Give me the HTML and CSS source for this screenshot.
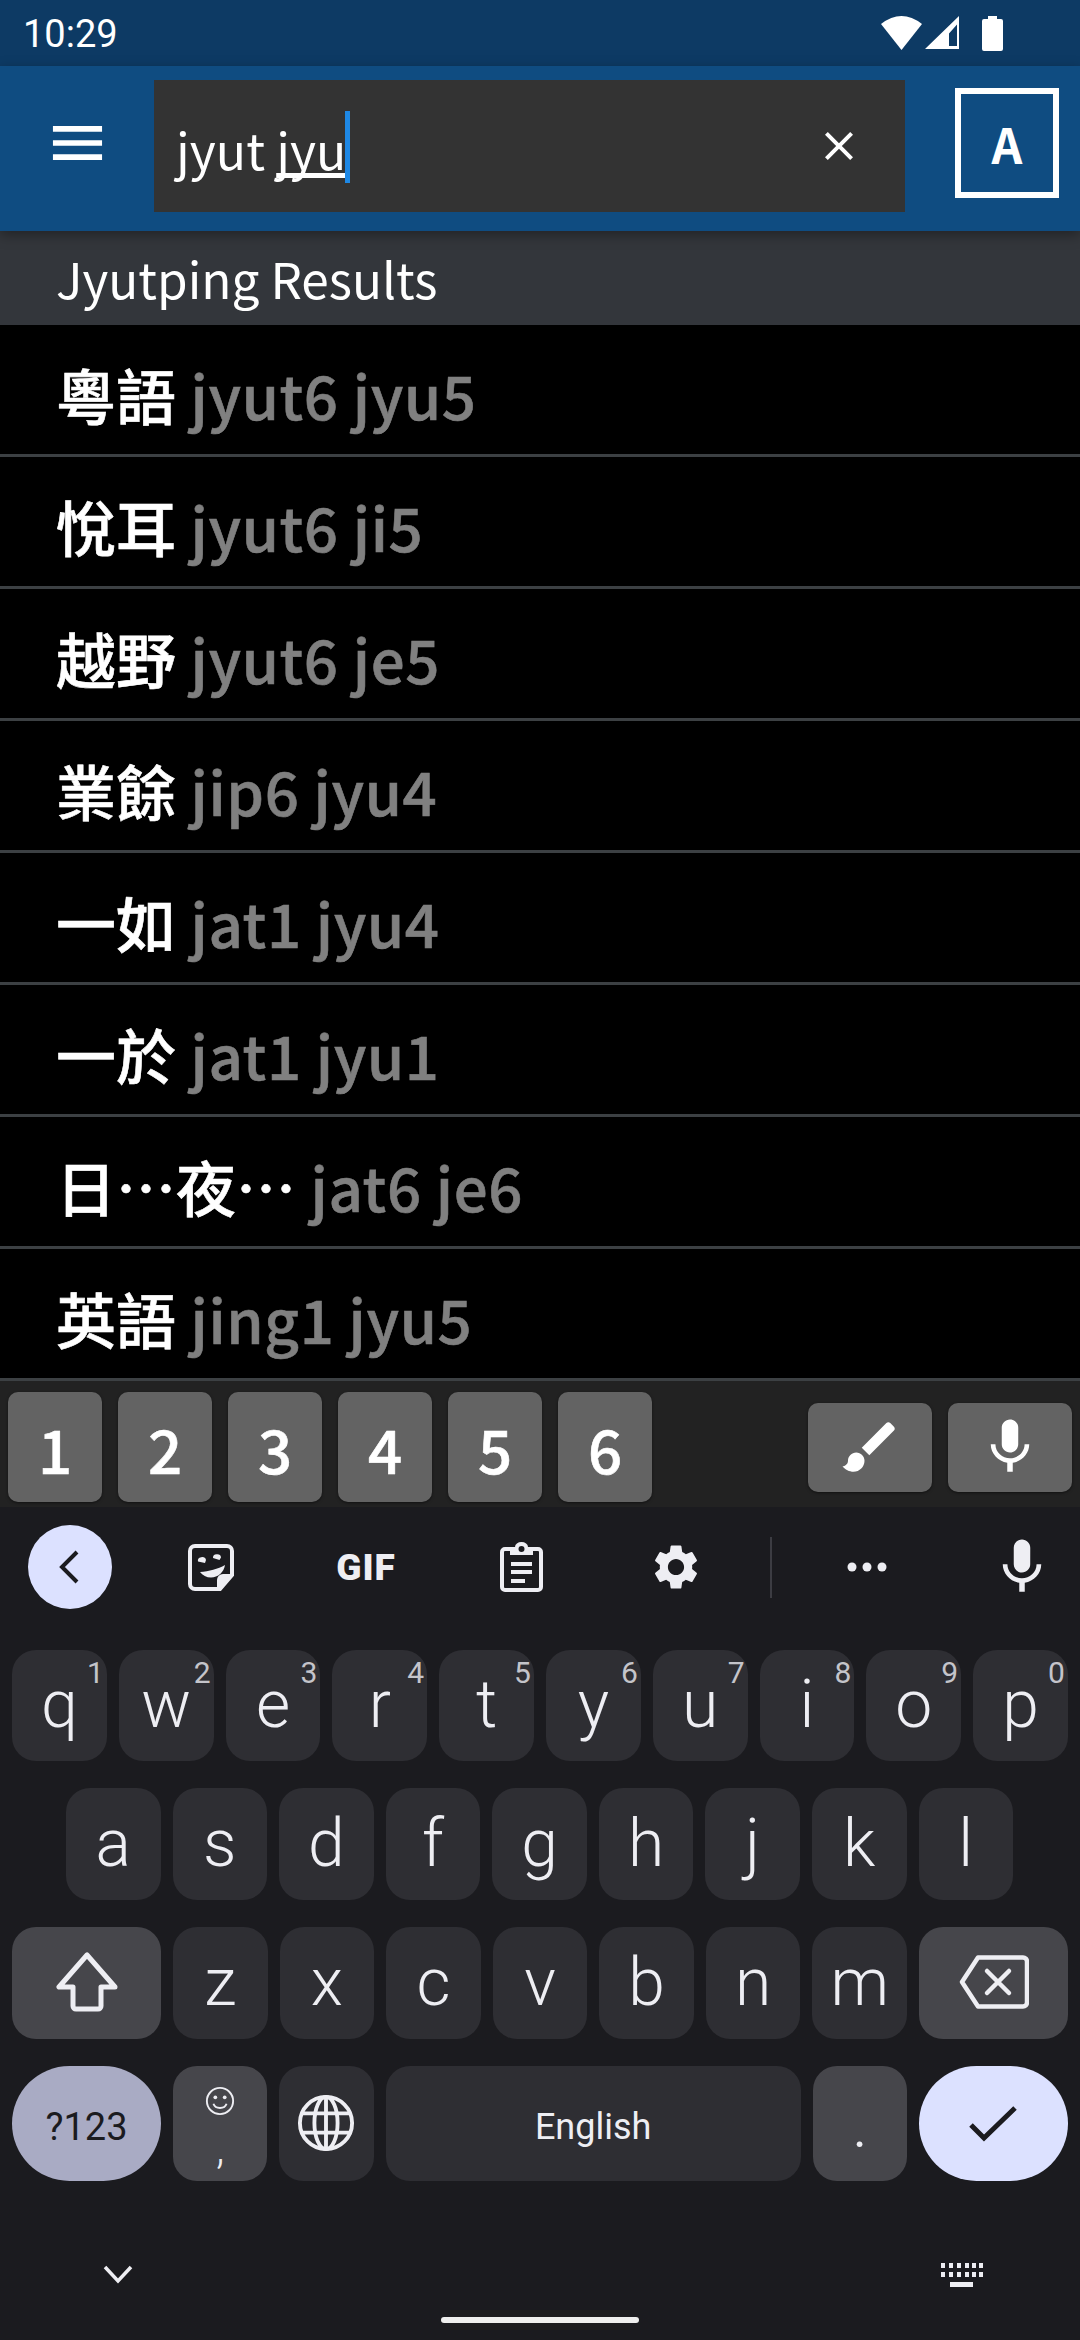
FILE: index.html
```html
<!DOCTYPE html>
<html lang="en">
<head>
    <meta charset="UTF-8">
    <meta name="viewport" content="width=device-width, initial-scale=1.0">
    <title>Jyutping Search</title>
    <link rel="stylesheet" href="styles.css">
</head>
<body>
    <div class="statusbar">
        <span class="clock">10:29</span>
        <div class="status-icons">
            <svg class="wifi" viewBox="0 0 41 34"><path d="M20.500 34 0 8Q20.500 -8 41 8z"/></svg>
            <svg class="signal" viewBox="0 0 34 34"><path d="M34 0V33H0zM32 8.500 24 17.500V30H32z" fill-rule="evenodd"/></svg>
            <svg class="battery" viewBox="0 0 21 35"><path d="M6 0h9v3h4a2 2 0 0 1 2 2v28a2 2 0 0 1-2 2H2a2 2 0 0 1-2-2V5a2 2 0 0 1 2-2h4z"/></svg>
        </div>
    </div>

    <div class="appbar">
        <svg class="menu-icon" viewBox="0 0 52 36"><path d="M0 0h52v6H0zM0 15h52v6H0zM0 30h52v6H0z"/></svg>
        <div class="search-box">
            <span class="search-text">jyut <u>jyu</u></span><span class="caret"></span>
            <svg class="clear-icon" viewBox="0 0 24 24"><path d="M19 6.410 17.590 5 12 10.590 6.410 5 5 6.410 10.590 12 5 17.590 6.410 19 12 13.410 17.590 19 19 17.590 13.410 12z"/></svg>
        </div>
        <div class="lang-box">A</div>
    </div>

    <div class="results-header">Jyutping Results</div>

    <div class="results">
        <div class="row"><span class="word">粵語</span> <span class="jyut">jyut6 jyu5</span></div>
        <div class="row"><span class="word">悅耳</span> <span class="jyut">jyut6 ji5</span></div>
        <div class="row"><span class="word">越野</span> <span class="jyut">jyut6 je5</span></div>
        <div class="row"><span class="word">業餘</span> <span class="jyut">jip6 jyu4</span></div>
        <div class="row"><span class="word">一如</span> <span class="jyut">jat1 jyu4</span></div>
        <div class="row"><span class="word">一於</span> <span class="jyut">jat1 jyu1</span></div>
        <div class="row"><span class="word">日…夜…</span> <span class="jyut">jat6 je6</span></div>
        <div class="row"><span class="word">英語</span> <span class="jyut">jing1 jyu5</span></div>
    </div>

    <div class="tone-bar">
        <div class="tone-key">1</div>
        <div class="tone-key">2</div>
        <div class="tone-key">3</div>
        <div class="tone-key">4</div>
        <div class="tone-key">5</div>
        <div class="tone-key">6</div>
        <div class="tone-spacer"></div>
        <div class="tool-key">
            <svg class="tool-icon" viewBox="0 0 24 24"><path d="M7 14c-1.660 0-3 1.340-3 3 0 1.310-1.160 2-2 2 .92 1.220 2.490 2 4 2 2.210 0 4-1.790 4-4 0-1.660-1.340-3-3-3zm13.710-9.370-1.340-1.340c-.39-.39-1.020-.39-1.410 0L9 12.250 11.750 15l8.960-8.960c.39-.39.39-1.020 0-1.410z"/></svg>
        </div>
        <div class="tool-key">
            <svg class="tool-icon" viewBox="0 0 24 24"><path d="M12 14c1.660 0 2.990-1.340 2.990-3L15 5c0-1.660-1.340-3-3-3S9 3.340 9 5v6c0 1.660 1.340 3 3 3zm5.300-3c0 3-2.540 5.100-5.300 5.100S6.700 14 6.700 11H5c0 3.410 2.720 6.230 6 6.720V21h2v-3.280c3.280-.48 6-3.300 6-6.720h-1.700z"/></svg>
        </div>
    </div>

    <div class="keyboard">
        <div class="kb-toolbar">
            <div class="back-circle">
                <svg viewBox="0 0 24 24"><path d="M15.500 4.500 8 12l7.500 7.500" fill="none" stroke="#1b1b1f" stroke-width="2"/></svg>
            </div>
            <div class="kb-tool">
                <svg class="sticker" viewBox="0 0 46 47">
                    <path class="line" d="M7 2h32a5 5 0 0 1 5 5v24L32 45H7a5 5 0 0 1-5-5V7a5 5 0 0 1 5-5z"/>
                    <path d="M44 30 32 45h-3V36a6 6 0 0 1 6-6z"/>
                    <path d="M10 17.500a4 3.500 0 0 1 8-1.500l-1 3zM25 14a4 3.500 0 0 1 8-.5l-1.500 2.500zM12 28c9-.5 18-3 25-7-1 7-7 12.500-14 12.500-4.500 0-8.500-2-11-5.500z"/>
                </svg>
            </div>
            <div class="kb-tool gif">GIF</div>
            <div class="kb-tool">
                <svg class="clipboard" viewBox="0 0 43 50">
                    <path class="line" d="M10 7H5a3 3 0 0 0-3 3v35a3 3 0 0 0 3 3h33a3 3 0 0 0 3-3V10a3 3 0 0 0-3-3h-5"/>
                    <path d="M10 5h5a6.500 5 0 0 1 13 0h5v8H10zM21.500 4a3 3 0 1 0 0 6 3 3 0 0 0 0-6z" fill-rule="evenodd"/>
                    <path d="M11 20h21v4H11zM11 28h21v4H11zM11 37h14v4H11z"/>
                </svg>
            </div>
            <div class="kb-tool">
                <svg class="gear" viewBox="0 0 24 24"><path d="M19.140 12.940c.04-.3.06-.61.06-.94 0-.32-.02-.64-.07-.94l2.030-1.580c.18-.14.23-.41.12-.61l-1.920-3.320c-.12-.22-.37-.29-.59-.22l-2.390.96c-.5-.38-1.030-.7-1.620-.94l-.36-2.540c-.04-.24-.24-.41-.48-.41h-3.840c-.24 0-.43.17-.47.41l-.36 2.540c-.59.24-1.130.57-1.620.94l-2.390-.96c-.22-.08-.47 0-.59.22L2.740 8.870c-.12.21-.08.47.12.61l2.030 1.580c-.05.3-.09.63-.09.94s.02.64.07.94l-2.030 1.580c-.18.14-.23.41-.12.61l1.920 3.320c.12.22.37.29.59.22l2.390-.96c.5.38 1.030.7 1.620.94l.36 2.540c.05.24.24.41.48.41h3.840c.24 0 .44-.17.47-.41l.36-2.540c.59-.24 1.130-.56 1.620-.94l2.390.96c.22.08.47 0 .59-.22l1.920-3.320c.12-.22.07-.47-.12-.61l-2.010-1.580zM12 15.600c-1.980 0-3.600-1.620-3.600-3.600s1.620-3.600 3.600-3.600 3.600 1.620 3.600 3.600-1.620 3.600-3.600 3.600z"/></svg>
            </div>
            <div class="kb-divider"></div>
            <div class="kb-tool">
                <svg class="dots" viewBox="0 0 40 10"><circle cx="5" cy="5" r="4.500"/><circle cx="20" cy="5" r="4.500"/><circle cx="35" cy="5" r="4.500"/></svg>
            </div>
            <div class="kb-tool">
                <svg class="kb-mic" viewBox="0 0 24 24"><path d="M12 14c1.660 0 2.990-1.340 2.990-3L15 5c0-1.660-1.340-3-3-3S9 3.340 9 5v6c0 1.660 1.340 3 3 3zm5.300-3c0 3-2.540 5.100-5.300 5.100S6.700 14 6.700 11H5c0 3.410 2.720 6.230 6 6.720V21h2v-3.280c3.280-.48 6-3.300 6-6.720h-1.700z"/></svg>
            </div>
        </div>

        <div class="key-row">
            <div class="key"><sup class="hint">1</sup>q</div>
            <div class="key"><sup class="hint">2</sup>w</div>
            <div class="key"><sup class="hint">3</sup>e</div>
            <div class="key"><sup class="hint">4</sup>r</div>
            <div class="key"><sup class="hint">5</sup>t</div>
            <div class="key"><sup class="hint">6</sup>y</div>
            <div class="key"><sup class="hint">7</sup>u</div>
            <div class="key"><sup class="hint">8</sup>i</div>
            <div class="key"><sup class="hint">9</sup>o</div>
            <div class="key"><sup class="hint">0</sup>p</div>
        </div>
        <div class="key-row home-row">
            <div class="key">a</div>
            <div class="key">s</div>
            <div class="key">d</div>
            <div class="key">f</div>
            <div class="key">g</div>
            <div class="key">h</div>
            <div class="key">j</div>
            <div class="key">k</div>
            <div class="key">l</div>
        </div>
        <div class="key-row lower-row">
            <div class="key wide mod">
                <svg class="shift" viewBox="0 0 62 60"><path d="M31 3 3 35h14v19a3 3 0 0 0 3 3h22a3 3 0 0 0 3-3V35h14z" fill="none" stroke="#eeeef3" stroke-width="5" stroke-linejoin="round"/></svg>
            </div>
            <div class="key">z</div>
            <div class="key">x</div>
            <div class="key">c</div>
            <div class="key">v</div>
            <div class="key">b</div>
            <div class="key">n</div>
            <div class="key">m</div>
            <div class="key wide mod">
                <svg class="backspace" viewBox="0 0 70 54"><path d="M19 2.500h45a4 4 0 0 1 4 4v41a4 4 0 0 1-4 4H19L3 27z" fill="none" stroke="#eeeef3" stroke-width="4.500" stroke-linejoin="round"/><path d="M28 16l22 22M50 16 28 38" fill="none" stroke="#eeeef3" stroke-width="4.500" stroke-linecap="round"/></svg>
            </div>
        </div>
        <div class="key-row bottom-row">
            <div class="key wide pill symbols">?123</div>
            <div class="key mod comma-key">
                <svg class="emoji" viewBox="0 0 32 32"><g fill="none" stroke="#eeeef3" stroke-width="2"><circle cx="16" cy="16" r="14"/><path d="M9 19c2 6 12 6 14 0"/></g><circle cx="11" cy="12" r="2" fill="#eeeef3"/><circle cx="21" cy="12" r="2" fill="#eeeef3"/></svg>
                <span class="comma">,</span>
            </div>
            <div class="key">
                <svg class="globe" viewBox="0 0 60 60"><g fill="none" stroke="#eeeef3" stroke-width="4"><circle cx="30" cy="30" r="27"/><ellipse cx="30" cy="30" rx="12" ry="27"/><path d="M30 3v54M5 20h50M5 40h50"/></g></svg>
            </div>
            <div class="key space">English</div>
            <div class="key mod period">.</div>
            <div class="key wide pill enter">
                <svg class="check" viewBox="0 0 48 36"><path d="M2 19l13 13L46 2" fill="none" stroke="#1b1b1f" stroke-width="5"/></svg>
            </div>
        </div>

        <div class="kb-bottom">
            <svg class="chevron" viewBox="0 0 30 20"><path d="M2 2l13 14L28 2" fill="none" stroke="#eeeef3" stroke-width="3.500"/></svg>
            <svg class="kb-switch" viewBox="0 0 42 24"><path d="M0 0h4v5H0zM8 0h4v5H8zM16 0h4v5h-4zM24 0h4v5h-4zM31 0h4v5h-4zM38 0h4v5h-4zM0 9h4v5H0zM8 9h4v5H8zM16 9h4v5h-4zM24 9h4v5h-4zM31 9h4v5h-4zM38 9h4v5h-4zM9 19h23v5H9z" fill="#eeeef3"/></svg>
        </div>
        <div class="nav-pill"></div>
    </div>
</body>
</html>
```

FILE: styles.css
```css
* {
    box-sizing: border-box;
}

body {
    margin: 0;
    width: 1080px;
    height: 2340px;
    overflow: hidden;
    display: flex;
    flex-direction: column;
    background-color: #1b1b1f;
    color: #fff;
    font-family: "Noto Sans CJK TC", "Noto Sans", sans-serif;
}

/* status bar */
.statusbar {
    height: 66px;
    background-color: #0d3a64;
    display: flex;
    align-items: center;
    justify-content: space-between;
    padding: 0 77px 0 23px;
}

.clock {
    font-family: Roboto, sans-serif;
    font-size: 38px;
    margin-top: 2px;
}

.status-icons {
    display: flex;
    align-items: flex-start;
    gap: 3px;
    fill: #fff;
}

.wifi {
    width: 41px;
    height: 34px;
}

.signal {
    width: 34px;
    height: 34px;
}

.battery {
    width: 21px;
    height: 35px;
    margin-left: 20px;
}

/* app bar */
.appbar {
    height: 165px;
    background-color: #0f4c81;
    display: flex;
    align-items: center;
    padding: 0 21px 0 52px;
    position: relative;
    z-index: 1;
    box-shadow: 0 4px 12px rgba(0, 0, 0, 0.35);
}

.menu-icon {
    width: 51px;
    height: 34px;
    fill: #fff;
    margin: -12px 51px 0 0;
}

.search-box {
    width: 751px;
    height: 132px;
    background-color: #333;
    display: flex;
    align-items: center;
    padding-left: 22px;
    margin-top: -5px;
}

.search-text {
    font-size: 50px;
    margin-top: 3px;
}

.search-text u {
    text-decoration-skip-ink: none;
}

.caret {
    width: 5px;
    height: 72px;
    background-color: #1e88e5;
    margin: 2px 0 0 -1px;
}

.clear-icon {
    width: 48px;
    height: 48px;
    fill: #fff;
    margin: 0 42px 0 auto;
}

.lang-box {
    width: 104px;
    height: 110px;
    border: 6px solid #fff;
    margin-left: auto;
    display: flex;
    align-items: center;
    justify-content: center;
    font-size: 48px;
    font-weight: 700;
    margin-top: -11px;
}

/* results */
.results-header {
    height: 94px;
    background-color: #33363b;
    padding-left: 56px;
    font-size: 49.5px;
    line-height: 94px;
    white-space: nowrap;
}

.results {
    background-color: #000;
}

.row {
    height: 132px;
    padding-left: 56px;
    border-bottom: 3px solid #3c4043;
    font-size: 60px;
    font-weight: 500;
    line-height: 137px;
    white-space: nowrap;
    -webkit-text-stroke: 0.6px currentColor;
}

.jyut {
    color: #808080;
    letter-spacing: 0.6px;
    margin-left: 1px;
}

/* tone keys */
.tone-bar {
    height: 126px;
    background-color: #222;
    display: flex;
    align-items: center;
    gap: 16px;
    padding: 6px 8px 0;
}

.tone-key {
    width: 94px;
    height: 110px;
    background-color: #636363;
    border-radius: 10px;
    display: flex;
    align-items: center;
    justify-content: center;
    font-size: 60px;
    font-weight: 500;
    -webkit-text-stroke: 0.6px currentColor;
    box-shadow: 0 1px 3px rgba(0, 0, 0, 0.5);
}

.tone-spacer {
    flex: 1;
}

.tool-key {
    width: 124px;
    height: 89px;
    background-color: #636363;
    border-radius: 10px;
    display: flex;
    align-items: center;
    justify-content: center;
    box-shadow: 0 1px 3px rgba(0, 0, 0, 0.5);
}

.tool-icon {
    width: 66px;
    height: 66px;
    fill: #fff;
}

/* keyboard */
.keyboard {
    flex: 1;
    background-color: #1b1b1f;
    position: relative;
    color: #eeeef3;
}

.kb-toolbar {
    height: 143px;
    display: flex;
    align-items: flex-start;
    padding-top: 18px;
}

.back-circle {
    width: 84px;
    height: 84px;
    border-radius: 50%;
    background-color: #dce1ff;
    margin-left: 28px;
    display: flex;
    align-items: center;
    justify-content: center;
}

.back-circle svg {
    width: 48px;
    height: 48px;
}

.kb-tool {
    width: 64px;
    height: 84px;
    display: flex;
    align-items: center;
    justify-content: center;
    fill: #eeeef3;
    margin-left: 91px;
    flex-shrink: 0;
}

.kb-tool:nth-child(2) {
    margin-left: 67px;
}

.sticker {
    width: 46px;
    height: 47px;
}

.clipboard {
    width: 43px;
    height: 50px;
}

.line {
    fill: none;
    stroke: #eeeef3;
    stroke-width: 4;
}

.gear {
    width: 54px;
    height: 54px;
}

.dots {
    width: 40px;
    height: 10px;
}

.kb-mic {
    width: 66px;
    height: 66px;
    flex-shrink: 0;
}

.gif {
    font-family: Roboto, sans-serif;
    font-size: 37px;
    font-weight: 900;
    letter-spacing: 1px;
}

.kb-divider {
    width: 2px;
    height: 61px;
    background-color: #3c3c42;
    margin: 12px 0 0 62px;
}

.kb-divider + .kb-tool {
    margin-left: 63px;
}

.key-row {
    display: flex;
    gap: 12px;
    padding: 0 12px;
    height: 111px;
    margin-bottom: 27px;
}

.home-row {
    padding: 0 67px 0 66px;
    height: 112px;
}

.lower-row {
    height: 112px;
}

.bottom-row {
    height: 115px;
}

.key {
    flex: 1;
    position: relative;
    background-color: #2e2e33;
    border-radius: 24px;
    display: flex;
    align-items: center;
    justify-content: center;
    font-family: Roboto, sans-serif;
    font-size: 66px;
    font-weight: 300;
    padding-bottom: 2px;
}

.hint {
    position: absolute;
    top: 5px;
    right: 3px;
    font-size: 30px;
    font-weight: 400;
    line-height: 36px;
    color: #c4c4ca;
    vertical-align: baseline;
}

.wide {
    flex: 0 0 149px;
}

.mod {
    background-color: #46464b;
}

.pill {
    border-radius: 58px;
}

.symbols {
    background-color: #a9abc4;
    color: #1b1b1f;
    font-size: 38px;
    font-weight: 400;
    padding: 6px 0 0;
}

.enter {
    background-color: #dce1ff;
    padding: 0;
}

.check {
    width: 48px;
    height: 36px;
}

.shift {
    width: 62px;
    height: 60px;
}

.backspace {
    width: 70px;
    height: 54px;
}

.comma-key {
    flex-direction: column;
    justify-content: flex-start;
    padding-top: 20px;
}

.emoji {
    width: 30px;
    height: 30px;
}

.comma {
    font-size: 44px;
    line-height: 44px;
    margin-top: 10px;
}

.globe {
    width: 58px;
    height: 58px;
}

.space {
    flex: 0 0 415px;
    font-size: 36px;
    font-weight: 400;
    padding: 6px 0 0;
}

.period {
    font-size: 50px;
    font-weight: 400;
    padding: 12px 0 0;
}

.kb-bottom {
    display: flex;
    justify-content: space-between;
    align-items: center;
    padding: 55px 97px 0 103px;
}

.chevron {
    width: 30px;
    height: 20px;
}

.kb-switch {
    width: 42px;
    height: 24px;
}

.nav-pill {
    position: absolute;
    left: 441px;
    top: 810px;
    width: 198px;
    height: 6px;
    border-radius: 3px;
    background-color: #eee;
}
```
